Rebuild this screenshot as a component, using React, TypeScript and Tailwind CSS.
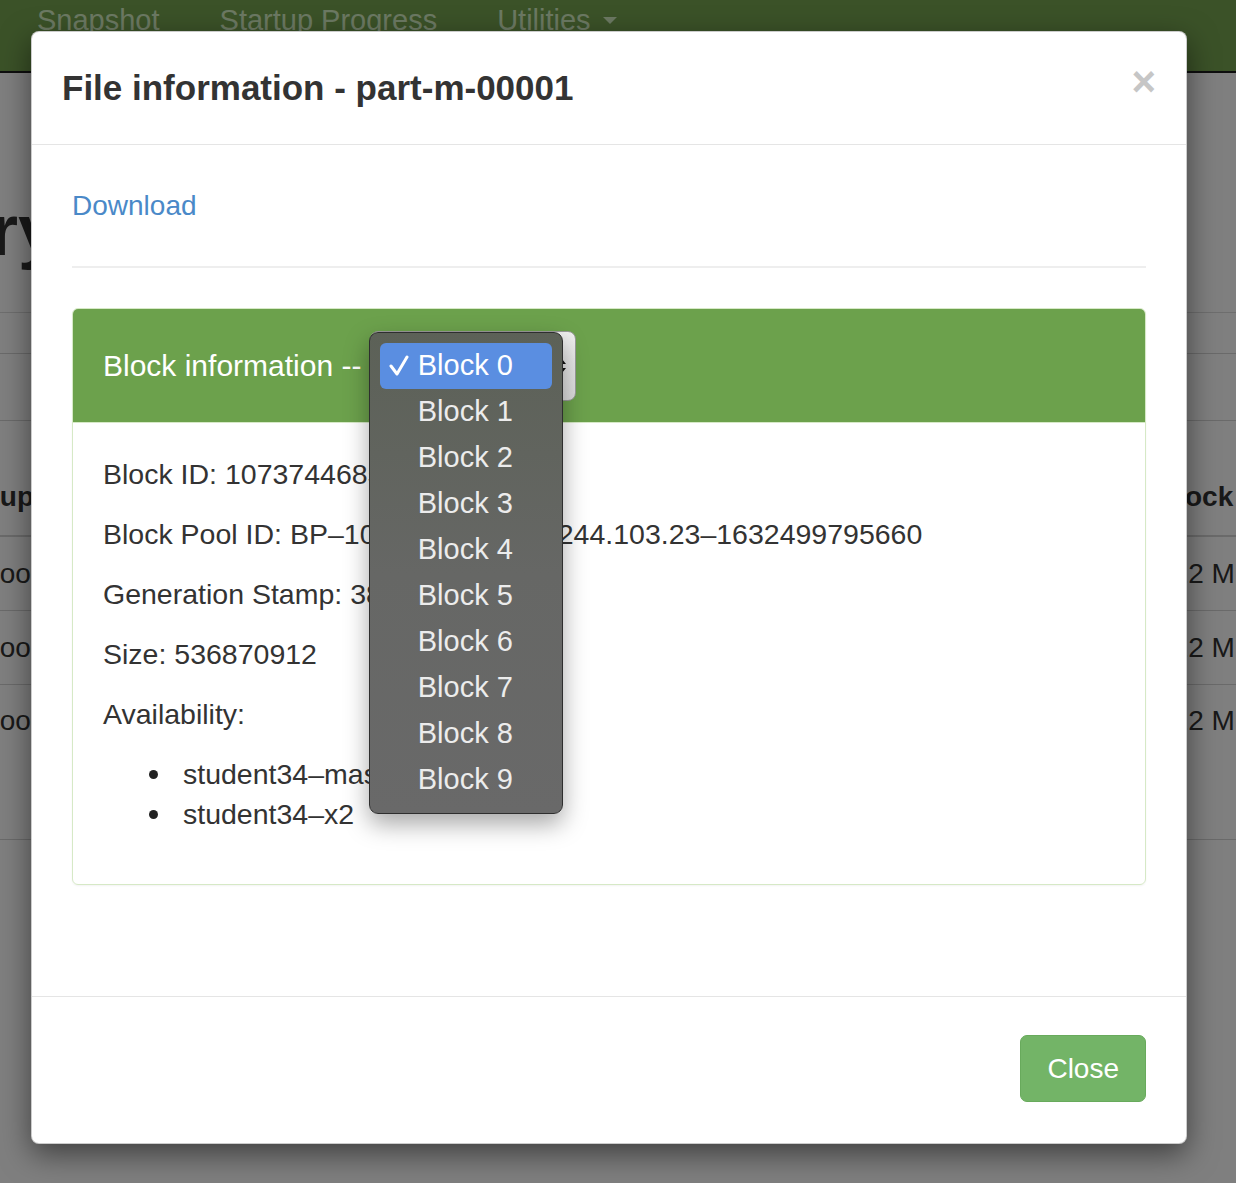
const blocks = ['Block 0', 'Block 1', 'Block 2', 'Block 3', 'Block 4', 'Block 5', 'Block 6', 'Block 7', 'Block 8', 'Block 9'];

function BackgroundPage() {
  return (
    <div className="flex flex-col">
      <nav className="h-[73px] bg-[#76a450] border-b-2 border-[#1c1c1c] flex items-start pl-[7px] text-[29px] leading-[40px] text-[#d8f2c6]">
        <a className="px-[30px]">Snapshot</a>
        <a className="px-[30px]">Startup Progress</a>
        <a className="px-[30px] flex items-center">
          Utilities
          <span className="ml-[12px] inline-block w-0 h-0 border-x-[7px] border-x-transparent border-t-[7px] border-t-current" />
        </a>
      </nav>

      <div className="h-[240px] flex items-end border-b border-[#dcdcdc]">
        <div className="w-[80px] overflow-hidden flex justify-end pr-[22px] pb-[42px]">
          <h1 className="whitespace-nowrap text-[72px] leading-[79px] font-bold text-[#333]">Browse Directory</h1>
        </div>
      </div>
      <div className="h-[41px] border-b border-[#d4d4d4]" />
      <div className="h-[67px] border-b border-[#d4d4d4]" />

      <div className="h-[116px] flex items-end justify-between border-b-2 border-[#d4d4d4] text-[28px] leading-[40px] font-bold text-[#333] pb-[18px]">
        <div className="w-[80px] overflow-hidden whitespace-nowrap"><div className="-ml-[50px]">Group</div></div>
        <div className="w-[79px] overflow-hidden whitespace-nowrap">Block Size</div>
      </div>
      {['h-[74px] items-center', 'h-[74px] items-center', 'h-[155px] items-start pt-[16px]'].map((cls, i) => (
        <div key={i} className={`${cls} flex justify-between border-b border-[#d4d4d4] text-[28px] leading-[40px] text-[#333]`}>
          <div className="w-[80px] overflow-hidden whitespace-nowrap"><div className="-ml-[47px]">hadoop</div></div>
          <div className="w-[79px] overflow-hidden whitespace-nowrap">512 MB</div>
        </div>
      ))}
    </div>
  );
}

function BlockSelect() {
  return (
    <div className="relative">
      <div className="w-[206px] h-[70px] rounded-[8px] border border-[#9a9a9a] bg-gradient-to-b from-[#f0f0f0] to-[#dcdcdc] flex items-center justify-between pl-[16px] pr-[8px] text-[28px] text-[#222]">
        <span>Block 0</span>
        <svg width="10" height="16" viewBox="0 0 10 16">
          <path d="M1 6 L5 1 L9 6 Z M1 10 L5 15 L9 10 Z" fill="#111" />
        </svg>
      </div>

      <div className="absolute left-[-1px] top-[1px] z-10 w-[194px] p-[10px] rounded-[9px] border border-[#2e2e2e] bg-gradient-to-b from-[#5c6157] via-[#666765] to-[#696969] shadow-[0_10px_24px_rgba(0,0,0,0.35)]">
        {blocks.map((b, i) => (
          <div
            key={b}
            className={`h-[46px] flex items-center rounded-[6px] text-[29px] ${i === 0 ? 'bg-[#5a8ee1] text-white' : 'text-[#ececec]'}`}
          >
            <span className="w-[38px] flex justify-center pl-[1px]">
              {i === 0 && (
                <svg width="20" height="21" viewBox="0 0 20 21">
                  <path d="M2 11 L8 19 L18 2" stroke="white" strokeWidth="3" fill="none" strokeLinecap="round" strokeLinejoin="round" />
                </svg>
              )}
            </span>
            <span>{b}</span>
          </div>
        ))}
      </div>
    </div>
  );
}

function Bullet({ children }: { children: string }) {
  return (
    <li className="flex items-center">
      <span className="w-[9px] h-[9px] rounded-full bg-[#222] mr-[25px] shrink-0" />
      {children}
    </li>
  );
}

function FileModal() {
  return (
    <div className="absolute left-[31px] top-[31px] w-[1156px] bg-white rounded-[8px] border border-black/20 shadow-[0_10px_30px_rgba(0,0,0,0.5)]">
      <div className="flex items-start justify-between px-[30px] pt-[30px] pb-[31px] border-b border-[#e5e5e5]">
        <h4 className="text-[35px] leading-[51px] font-bold text-[#333]">File information - part-m-00001</h4>
        <button className="text-[42px] leading-none font-bold text-[#c6c6c6] mt-[-1px]">×</button>
      </div>

      <div className="px-[40px] pt-[41px] pb-[40px]">
        <a className="block text-[28px] leading-[40px] text-[#4a89c8]">Download</a>
        <hr className="my-[40px] border-0 border-t-2 border-[#eee]" />

        <div className="rounded-[6px] border border-[#d6e9c6] shadow-[0_1px_2px_rgba(0,0,0,0.05)]">
          <div className="h-[114px] bg-[#6ca14c] border-b border-[#d6e9c6] rounded-t-[5px] flex items-center px-[30px] text-white text-[30px]">
            <span className="whitespace-pre">Block information -- </span>
            <BlockSelect />
          </div>
          <div className="px-[30px] pt-[31px] pb-[30px] text-[28.5px] leading-[40px] text-[#333]">
            <p className="mb-[20px]">Block ID: 1073744685</p>
            <p className="mb-[20px]">Block Pool ID: BP–1049358221–10.244.103.23–1632499795660</p>
            <p className="mb-[20px]">Generation Stamp: 3862</p>
            <p className="mb-[20px]">Size: 536870912</p>
            <p className="mb-[20px]">Availability:</p>
            <ul className="pl-[46px] mb-[20px]">
              <Bullet>student34–master</Bullet>
              <Bullet>student34–x2</Bullet>
            </ul>
          </div>
        </div>
        <div className="h-[40px]" />
      </div>

      <div className="mt-[31px] border-t border-[#e5e5e5] flex justify-end px-[40px] pt-[38px] pb-[41px]">
        <button className="h-[67px] px-[26px] rounded-[7px] bg-[#73b467] border border-[#68aa5c] text-white text-[28px]">Close</button>
      </div>
    </div>
  );
}

export default function App() {
  return (
    <div className="relative w-[1236px] h-[1183px] overflow-hidden bg-white font-['Liberation_Sans',Arial,sans-serif] text-[#333]">
      <BackgroundPage />
      <div className="absolute inset-0 bg-black/50" />
      <FileModal />
    </div>
  );
}
